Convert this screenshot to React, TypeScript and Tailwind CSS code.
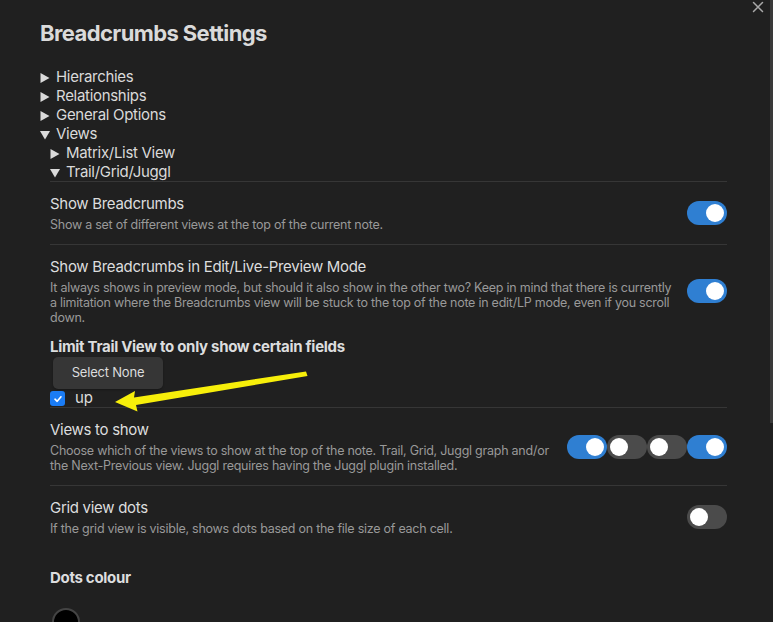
import React from 'react';

const font = { fontFamily: 'Inter, "Noto Sans", sans-serif' };

function Toggle({ on }: { on: boolean }) {
  return (
    <div
      className={`relative w-[40px] h-[24px] rounded-full shrink-0 ${on ? 'bg-[#2f7fd2]' : 'bg-[#4b4b4b]'}`}
    >
      <div
        className={`absolute top-[3px] w-[18px] h-[18px] rounded-full bg-white ${on ? 'left-[19px]' : 'left-[3px]'}`}
      />
    </div>
  );
}

function Triangle({ open }: { open: boolean }) {
  return (
    <svg width="10" height="10" viewBox="0 0 10 10" className="shrink-0">
      {open ? (
        <polygon points="0,1 10,1 5,9.5" fill="#dadada" />
      ) : (
        <polygon points="0.5,0 9.5,5 0.5,10" fill="#dadada" />
      )}
    </svg>
  );
}

function TreeRow({ label, open, indent }: { label: string; open: boolean; indent?: boolean }) {
  return (
    <div className={`flex items-center h-[19px] gap-[6px] ${indent ? 'pl-[10px]' : ''}`}>
      <Triangle open={open} />
      <span className="text-[15px] tracking-[-0.3px] text-[#dadada]">{label}</span>
    </div>
  );
}

function SettingItem({
  name,
  desc,
  control,
  border = true,
}: {
  name: string;
  desc: React.ReactNode;
  control: React.ReactNode;
  border?: boolean;
}) {
  return (
    <div className={`flex items-center py-[12px] ${border ? 'border-t border-[#363636]' : ''}`}>
      <div className="flex-1 pr-[12px]">
        <div className="text-[15px] leading-[20px] tracking-[-0.3px] text-[#dcddde]">{name}</div>
        <div className="mt-[3px] text-[12.5px] leading-[15px] tracking-[-0.25px] text-[#999999]">{desc}</div>
      </div>
      <div className="flex">{control}</div>
    </div>
  );
}

export default function App() {
  return (
    <div className="relative w-[773px] h-[622px] bg-[#202020] overflow-hidden flex" style={font}>
      {/* settings content */}
      <div className="flex-1 pl-[40px] pr-[43px] pt-[19px]">
        <h1 className="text-[22px] leading-[28px] font-bold text-[#dadada] tracking-[-0.6px]">
          Breadcrumbs Settings
        </h1>

        <div className="mt-[21px]">
          <TreeRow label="Hierarchies" open={false} />
          <TreeRow label="Relationships" open={false} />
          <TreeRow label="General Options" open={false} />
          <TreeRow label="Views" open={true} />
          <TreeRow label="Matrix/List View" open={false} indent />
          <TreeRow label="Trail/Grid/Juggl" open={true} indent />
        </div>

        <div className="ml-[10px] mt-[-1px]">
          <SettingItem
            name="Show Breadcrumbs"
            desc="Show a set of different views at the top of the current note."
            control={<Toggle on />}
          />
          <SettingItem
            name="Show Breadcrumbs in Edit/Live-Preview Mode"
            desc={
              <>
                It always shows in preview mode, but should it also show in the other two? Keep in mind that there is currently
                <br />
                a limitation where the Breadcrumbs view will be stuck to the top of the note in edit/LP mode, even if you scroll
                <br />
                down.
              </>
            }
            control={<Toggle on />}
          />

          {/* Limit trail view */}
          <div className="text-[15px] leading-[20px] font-bold tracking-[-0.3px] text-[#dcddde]">
            Limit Trail View to only show certain fields
          </div>
          <button className="ml-[3px] w-[110px] h-[32px] rounded-[5px] bg-[#363636] text-[13px] tracking-[-0.2px] text-[#dcddde] shadow-[0_1px_2px_rgba(0,0,0,0.3)]">
            Select None
          </button>
          <div className="flex items-center h-[17px] mt-[1px] gap-[10px]">
            <div className="w-[15px] h-[15px] rounded-[3px] bg-[#1a7cf5] flex items-center justify-center">
              <svg width="10" height="10" viewBox="0 0 10 10">
                <path d="M2 5.2 L4.2 7.3 L8 2.8" stroke="white" strokeWidth="1.6" fill="none" strokeLinecap="round" strokeLinejoin="round" />
              </svg>
            </div>
            <span className="text-[15px] text-[#dcddde]">up</span>
          </div>

          <SettingItem
            name="Views to show"
            desc={
              <>
                Choose which of the views to show at the top of the note. Trail, Grid, Juggl graph and/or
                <br />
                the Next-Previous view. Juggl requires having the Juggl plugin installed.
              </>
            }
            control={
              <>
                <Toggle on />
                <Toggle on={false} />
                <Toggle on={false} />
                <Toggle on />
              </>
            }
          />
          <SettingItem
            name="Grid view dots"
            desc="If the grid view is visible, shows dots based on the file size of each cell."
            control={<Toggle on={false} />}
          />

          <div className="mt-[20px] text-[15px] leading-[20px] font-bold tracking-[-0.3px] text-[#dcddde]">Dots colour</div>
          <div className="mt-[20px] ml-[2px] w-[28px] h-[28px] rounded-full bg-black border-2 border-[#444444]" />
        </div>
      </div>

      {/* scrollbar */}
      <div className="w-[3px] h-full">
        <div className="w-[3px] h-[423px] bg-[#3a3a3a]" />
      </div>

      {/* close button */}
      <svg className="absolute left-[752px] top-[1px]" width="12" height="12" viewBox="0 0 12 12">
        <path d="M1.5 1.5 L10.5 10.5 M10.5 1.5 L1.5 10.5" stroke="#a8a8a8" strokeWidth="1.5" strokeLinecap="round" />
      </svg>

      {/* annotation arrow */}
      <svg className="absolute left-0 top-0 pointer-events-none" width="773" height="622">
        <polygon
          points="115,402 135,391 134,397.5 306,371.5 307.5,376 136,405 137.5,411.5"
          fill="#f7ef0a"
        />
      </svg>
    </div>
  );
}
